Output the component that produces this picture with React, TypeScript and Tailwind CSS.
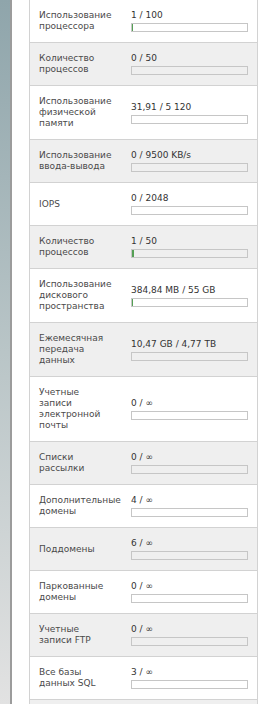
import React from "react";

interface StatRow {
  label: string[];
  value: string;
  percent: number;
}

const rows: StatRow[] = [
  { label: ["Использование", "процессора"], value: "1 / 100", percent: 1 },
  { label: ["Количество", "процессов"], value: "0 / 50", percent: 0 },
  { label: ["Использование", "физической", "памяти"], value: "31,91 / 5 120", percent: 0 },
  { label: ["Использование", "ввода-вывода"], value: "0 / 9500 KB/s", percent: 0 },
  { label: ["IOPS"], value: "0 / 2048", percent: 0 },
  { label: ["Количество", "процессов"], value: "1 / 50", percent: 2 },
  { label: ["Использование", "дискового", "пространства"], value: "384,84 MB / 55 GB", percent: 0.8 },
  { label: ["Ежемесячная", "передача", "данных"], value: "10,47 GB / 4,77 TB", percent: 0 },
  { label: ["Учетные", "записи", "электронной", "почты"], value: "0 / ∞", percent: 0 },
  { label: ["Списки", "рассылки"], value: "0 / ∞", percent: 0 },
  { label: ["Дополнительные", "домены"], value: "4 / ∞", percent: 0 },
  { label: ["Поддомены"], value: "6 / ∞", percent: 0 },
  { label: ["Паркованные", "домены"], value: "0 / ∞", percent: 0 },
  { label: ["Учетные", "записи FTP"], value: "0 / ∞", percent: 0 },
  { label: ["Все базы", "данных SQL"], value: "3 / ∞", percent: 0 },
];

function UsageBar({ percent }: { percent: number }) {
  return (
    <div className="h-[9px] w-[117px] border border-[#c6c6c6]">
      {percent > 0 && (
        <div
          className="h-full bg-[#55a055]"
          style={{ width: `${Math.max(percent, 1)}%` }}
        />
      )}
    </div>
  );
}

export default function App() {
  return (
    <div className="flex h-[704px] w-[264px] overflow-hidden bg-white font-['DejaVu_Sans',sans-serif] text-[9px] leading-[11px]">
      <div className="w-[10px] shrink-0 bg-gradient-to-b from-[#8fa5ab] via-[#b9c5c7] to-[#e2e2e2]" />
      <div className="w-[2px] shrink-0 bg-[#9c9c9c]" />
      <div className="flex-1 pl-[17px]">
        <div className="flex h-full w-[229px] flex-col border-x border-[#d2d2d2]">
          {rows.map((row, i) => (
            <div
              key={i}
              className={`grid grid-cols-[91px_136px] border-b border-[#d2d2d2] ${
                i % 2 === 1 ? "bg-[#efefef]" : "bg-white"
              }`}
            >
              <div className="flex items-center py-[10px] pl-[9px] text-[#4a4a4a]">
                <div>
                  {row.label.map((l, j) => (
                    <div key={j}>{l}</div>
                  ))}
                </div>
              </div>
              <div className="flex items-center py-[10px] pl-[10px]">
                <div className="flex flex-col gap-[2px]">
                  <div className="text-[#333]">{row.value}</div>
                  <UsageBar percent={row.percent} />
                </div>
              </div>
            </div>
          ))}
          {/* next row, scrolled below the fold */}
          <div className="flex-1 bg-[#efefef]" />
        </div>
      </div>
    </div>
  );
}
